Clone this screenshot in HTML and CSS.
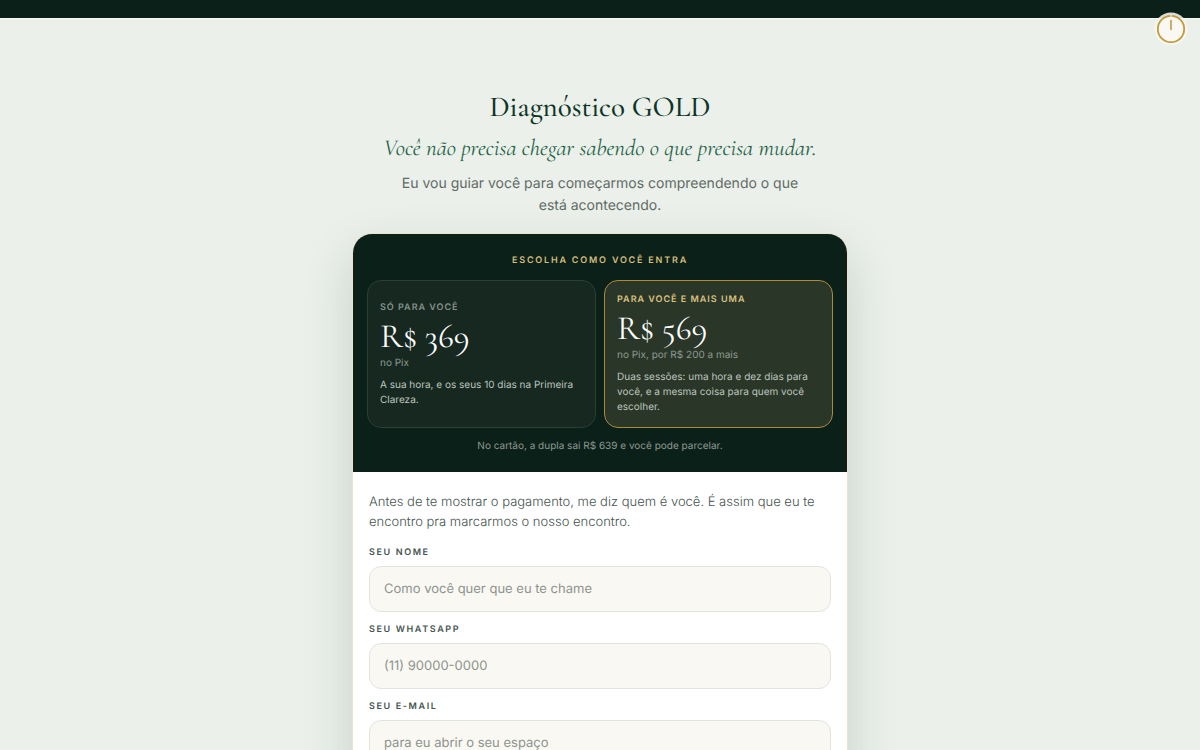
FILE: index.html
```html
<!DOCTYPE html>
<html lang="pt-BR">
  <head>
    <meta charset="UTF-8">
    <meta name="viewport" content="width=device-width, initial-scale=1">
    <title>Diagnóstico GOLD</title>
    <link rel="stylesheet" href="styles.css">
  </head>
  <body>
    <div class="topbar"></div>

    <button class="clock" type="button" aria-label="Relógio da sessão">
      <svg width="34" height="34" viewBox="0 0 34 34" aria-hidden="true">
        <circle cx="17" cy="17" r="16.5" fill="#f7f6f0" fill-opacity="0.88"/>
        <circle cx="17" cy="17" r="13.2" fill="#faf8f2" stroke="#c39a3e" stroke-width="1.8"/>
        <path d="M17 2.8v2" stroke="#e8dcc0" stroke-width="1.6"/>
        <path d="M17 8.5v9" stroke="#c39a3e" stroke-width="1.6" stroke-linecap="round"/>
      </svg>
    </button>

    <main class="page">
      <header class="intro">
        <h1>Diagnóstico GOLD</h1>
        <p class="tagline">Você não precisa chegar sabendo o que precisa mudar.</p>
        <p class="lead">Eu vou guiar você para começarmos compreendendo o que está acontecendo.</p>
      </header>

      <section class="card">
        <div class="offer">
          <h2 class="offer-title">Escolha como você entra</h2>
          <div class="options">
            <button class="option" type="button" aria-pressed="false">
              <span class="option-label">Só para você</span>
              <span class="option-price">R$ 369</span>
              <span class="option-method">no Pix</span>
              <span class="option-text">A sua hora, e os seus 10 dias na Primeira Clareza.</span>
            </button>
            <button class="option selected" type="button" aria-pressed="true">
              <span class="option-label">Para você e mais uma</span>
              <span class="option-price">R$ 569</span>
              <span class="option-method">no Pix, por R$ 200 a mais</span>
              <span class="option-text">Duas sessões: uma hora e dez dias para você, e a mesma coisa para quem você escolher.</span>
            </button>
          </div>
          <p class="offer-note">No cartão, a dupla sai R$ 639 e você pode parcelar.</p>
        </div>

        <form class="form">
          <p class="form-intro">Antes de te mostrar o pagamento, me diz quem é você. É assim que eu te encontro pra marcarmos o nosso encontro.</p>
          <div class="field">
            <label for="nome">Seu nome</label>
            <input id="nome" type="text" placeholder="Como você quer que eu te chame">
          </div>
          <div class="field">
            <label for="whatsapp">Seu WhatsApp</label>
            <input id="whatsapp" type="tel" placeholder="(11) 90000-0000">
          </div>
          <div class="field">
            <label for="email">Seu e-mail</label>
            <input id="email" type="email" placeholder="para eu abrir o seu espaço">
          </div>
        </form>
      </section>
    </main>
  </body>
</html>
```
FILE: styles.css
```css
* {
  box-sizing: border-box;
}
html {
  scrollbar-width: none;
}
body {
  margin: 0;
  font-family: Inter, sans-serif;
  text-rendering: geometricPrecision;
  background-color: #ebf0ea;
  color: #46554f;
}
h1, h2, p {
  margin: 0;
}
button, input {
  font-family: inherit;
  text-rendering: inherit;
}

.topbar {
  height: 18px;
  background-color: #0b2018;
  box-shadow: 0 1px 0 #f8faf7;
}

/* Floating clock over the top bar */
.clock {
  position: fixed;
  top: 12px;
  right: 12px;
  padding: 0;
  border: none;
  background: none;
  line-height: 0;
  cursor: pointer;
}

.page {
  max-width: 528px;
  margin: 0 auto;
  padding: 72px 16px 48px;
}

.intro {
  text-align: center;
}
h1 {
  font-family: "Cormorant Garamond", "Liberation Serif", serif;
  font-size: 29px;
  font-weight: 500;
  line-height: 36px;
  color: #0e3527;
}
.tagline {
  margin-top: 6px;
  font-family: "Cormorant Garamond", "Liberation Serif", serif;
  font-size: 23px;
  font-style: italic;
  line-height: 32px;
  color: #236347;
}
.lead {
  max-width: 420px;
  margin: 9px auto 0;
  font-size: 14px;
  line-height: 22px;
  color: #5f6b65;
}

.card {
  margin-top: 16px;
  border: 1px solid #eee2cb;
  border-radius: 20px;
  background-color: #fff;
  box-shadow: 0 20px 50px rgba(14, 53, 39, 0.16);
  overflow: hidden;
}

.offer {
  padding: 20px 14px 18px;
  background-color: #0b2018;
  text-align: center;
}
.offer-title {
  font-size: 9px;
  font-weight: 600;
  letter-spacing: 0.2em;
  line-height: 14px;
  text-transform: uppercase;
  color: #d4bd7c;
}
.options {
  display: grid;
  grid-template-columns: 1fr 1fr;
  gap: 8px;
  margin-top: 12px;
}
.option {
  padding: 12px;
  border: 1px solid #2b3f36;
  border-radius: 14px;
  background-color: #162820;
  text-align: left;
  color: #fff;
  cursor: pointer;
}
.option span {
  display: block;
}
.option-label {
  font-size: 9px;
  font-weight: 600;
  letter-spacing: 1px;
  line-height: 14px;
  text-transform: uppercase;
  color: #84918a;
}
.option-price {
  margin-top: 3px;
  font-family: "Cormorant Garamond", "Liberation Serif", serif;
  font-size: 34px;
  line-height: 38px;
}
.option-method {
  font-size: 10px;
  line-height: 14px;
  color: #8d9991;
}
.option-text {
  margin-top: 8px;
  font-size: 10px;
  line-height: 15px;
  color: #bcc5bf;
}
.option.selected {
  border-color: #ab8a3a;
  background-color: #2a3628;
}
.option.selected .option-label {
  color: #d9c27f;
}
.offer-note {
  margin-top: 11px;
  font-size: 10px;
  line-height: 15px;
  color: #8d9991;
}

.form {
  display: flex;
  flex-direction: column;
  gap: 11px;
  padding: 20px 16px;
}
.form-intro {
  margin-bottom: 3px;
  font-size: 13px;
  font-weight: 300;
  line-height: 20px;
}
.field label {
  display: block;
  margin-bottom: 6px;
  font-size: 9px;
  font-weight: 600;
  letter-spacing: 0.18em;
  line-height: 14px;
  text-transform: uppercase;
}
.field input {
  display: block;
  width: 100%;
  height: 46px;
  padding: 0 14px;
  border: 1px solid #e0e5df;
  border-radius: 12px;
  background-color: #faf8f3;
  font-size: 13px;
  color: #24362e;
}
.field input::placeholder {
  color: #8c948e;
}
```
